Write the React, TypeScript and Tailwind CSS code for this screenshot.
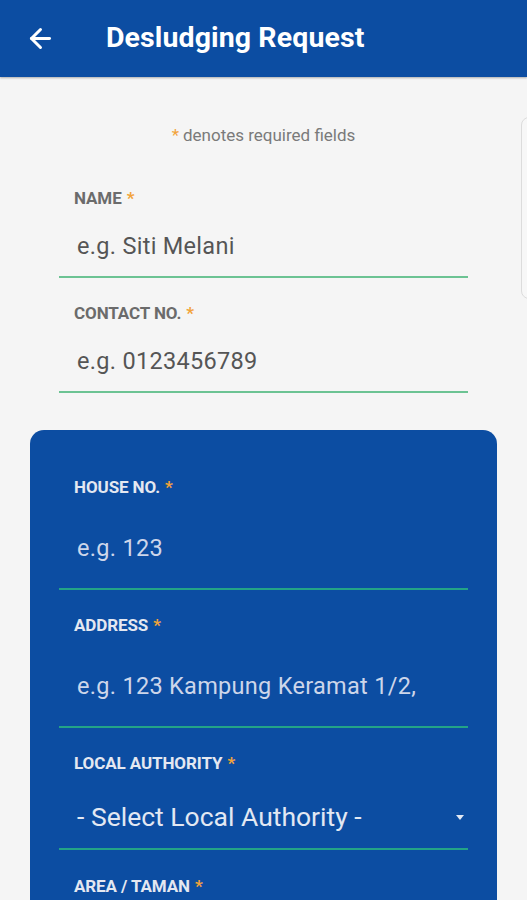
import { ArrowLeft } from 'lucide-react';

const Req = () => <span className="text-[#f2a33a] ml-[5px]">*</span>;

const LightField = ({ label, placeholder }: { label: string; placeholder: string }) => (
  <div className="mb-[25px]">
    <div className="px-[15px] h-[20px] leading-[20px] text-[17px] font-bold text-[#6b6b6b] tracking-[-0.1px]">
      {label}
      <Req />
    </div>
    <input
      placeholder={placeholder}
      className="mt-[8px] w-full h-[62px] bg-transparent border-b-2 border-[#6cc393] px-[18px] text-[23.5px] tracking-[0.3px] font-['Roboto',sans-serif] outline-none placeholder:text-[#555]"
    />
  </div>
);

const DarkField = ({ label, placeholder }: { label: string; placeholder: string }) => (
  <div className="mb-[25px]">
    <div className="px-[15px] h-[20px] leading-[20px] text-[17px] font-bold text-[#e4e8f1] tracking-[-0.1px]">
      {label}
      <Req />
    </div>
    <input
      placeholder={placeholder}
      className="mt-[10px] w-full h-[83px] bg-transparent border-b-2 border-[#23a487] px-[18px] text-[23.5px] tracking-[0.3px] font-['Roboto',sans-serif] outline-none placeholder:text-[#cdd6ea]"
    />
  </div>
);

export default function App() {
  return (
    <div className="relative min-h-[900px] bg-[#f5f5f5] overflow-hidden font-['Roboto',sans-serif]">
      <header className="h-[77px] bg-[#0c4da2] flex items-center shadow-[0_1px_2px_rgba(0,0,0,0.3)]">
        <ArrowLeft size={31} strokeWidth={2.3} className="text-white ml-[25px]" />
        <h1 className="ml-[50px] text-white text-[28.5px] font-bold tracking-[0.1px]">Desludging Request</h1>
      </header>

      <div className="absolute top-[117px] left-[521px] w-[30px] h-[182px] rounded-[8px] border border-[#dcdcdc] bg-[#f7f7f7]" />

      <p className="mt-[48px] h-[20px] leading-[20px] text-center text-[17px] text-[#7a7a7a]">
        <span className="text-[#f2a33a] mr-[4px]">*</span>denotes required fields
      </p>

      <div className="mt-[43px] px-[59px]">
        <LightField label="NAME" placeholder="e.g. Siti Melani" />
        <LightField label="CONTACT NO." placeholder="e.g. 0123456789" />
      </div>

      <div className="mt-[37px] mx-[30px] bg-[#0c4da2] rounded-t-[14px] px-[29px] pt-[47px]">
        <DarkField label="HOUSE NO." placeholder="e.g. 123" />
        <DarkField label="ADDRESS" placeholder="e.g. 123 Kampung Keramat 1/2," />
        <div className="mb-[26px]">
          <div className="px-[15px] h-[20px] leading-[20px] text-[17px] font-bold text-[#e4e8f1] tracking-[-0.1px]">
            LOCAL AUTHORITY
            <Req />
          </div>
          <div className="mt-[12px] h-[65px] border-b-2 border-[#23a487] flex items-center justify-between pl-[18px] pr-[4px]">
            <span className="text-[26.5px] text-[#e2e8f3]">- Select Local Authority -</span>
            <svg width="8" height="5" viewBox="0 0 8 5" className="mt-[1px]">
              <path d="M0 0 L8 0 L4 5 Z" fill="#e2e8f3" />
            </svg>
          </div>
        </div>
        <div className="px-[15px] h-[20px] leading-[20px] text-[17px] font-bold text-[#e4e8f1] tracking-[-0.1px]">
          AREA / TAMAN
          <Req />
        </div>
        <div className="h-[40px]" />
      </div>
    </div>
  );
}
